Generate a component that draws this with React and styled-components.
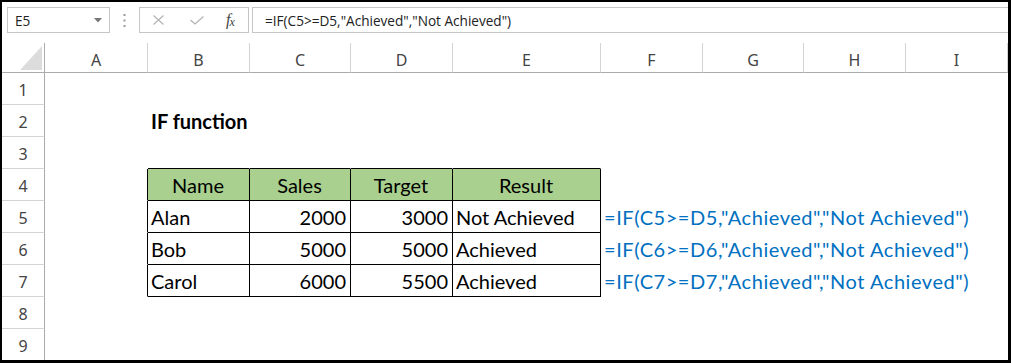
import React from "react";
import styled, { createGlobalStyle } from "styled-components";

const GlobalStyle = createGlobalStyle`
  html, body {
    margin: 0;
    padding: 0;
    background: #fff;
  }
  * {
    box-sizing: border-box;
  }
`;

const Frame = styled.div`
  width: 1011px;
  height: 363px;
  border-style: solid;
  border-color: #000;
  border-width: 2px 3px 3px 2px;
  background: #fff;
  overflow: hidden;
  display: flex;
  flex-direction: column;
`;

/* ---------- formula bar ---------- */

const FormulaBar = styled.div`
  flex: none;
  height: 41px;
  display: flex;
  align-items: flex-start;
  padding: 5px 0 0 5px;
  font-family: "Open Sans", "Noto Sans", sans-serif;
  font-size: 13.6px;
  color: #222;
`;

const NameBox = styled.div`
  width: 103px;
  height: 26px;
  border: 1px solid #c6c6c6;
  display: flex;
  align-items: center;
  justify-content: space-between;
  padding: 0 7px 0 7px;
`;

const Grip = styled.div`
  margin: 0 13px;
  height: 26px;
  display: flex;
  align-items: center;
`;

const FxBox = styled.div`
  width: 110px;
  height: 26px;
  border: 1px solid #c6c6c6;
  display: flex;
  align-items: center;
  padding-left: 13px;
`;

const Fx = styled.span`
  margin-left: 22px;
  font-family: "Liberation Serif", serif;
  font-style: italic;
  font-size: 16px;
  color: #444;
  letter-spacing: -1px;

  sub {
    font-size: 12px;
    vertical-align: -1px;
  }
`;

const FormulaInput = styled.div`
  flex: 1;
  margin-left: 3px;
  height: 26px;
  border: 1px solid #c6c6c6;
  border-right: none;
  display: flex;
  align-items: center;
  padding-left: 12px;
  white-space: nowrap;
`;

/* ---------- sheet grid ---------- */

const Sheet = styled.div`
  display: grid;
  grid-template-columns: 43px 103px 102px 101px 102px 148px 102px 101px 102px 102px;
  grid-template-rows: 30px repeat(9, 32px);
`;

const Corner = styled.div`
  border-right: 1px solid #ababab;
  border-bottom: 1px solid #ababab;
  display: flex;
  align-items: flex-end;
  justify-content: flex-end;
  padding: 0 2px 2px 0;
`;

const ColHead = styled.div`
  border-right: 1px solid #d4d4d4;
  border-bottom: 1px solid #ababab;
  display: flex;
  align-items: center;
  justify-content: center;
  padding-top: 4px;
  font-family: "Noto Sans", "Open Sans", sans-serif;
  font-size: 16px;
  color: #444;
`;

const RowHead = styled.div`
  border-right: 1px solid #ababab;
  border-bottom: 1px solid #d4d4d4;
  display: flex;
  align-items: center;
  justify-content: center;
  padding-top: 3px;
  font-family: "Noto Sans", "Open Sans", sans-serif;
  font-size: 16px;
  color: #444;
`;

const Cell = styled.div`
  border-right: 1px solid ${({ $right }) => $right || "transparent"};
  border-bottom: 1px solid ${({ $bottom }) => $bottom || "transparent"};
  background: ${({ $fill }) => $fill || "transparent"};
  display: flex;
  align-items: center;
  justify-content: ${({ $align }) =>
    $align === "right" ? "flex-end" : $align === "center" ? "center" : "flex-start"};
  padding: 0 4px 0 3px;
  white-space: nowrap;
  overflow: visible;
  font-family: "Lato", "Liberation Sans", sans-serif;
  font-size: 20px;
  font-weight: ${({ $bold }) => ($bold ? 700 : 400)};
  letter-spacing: ${({ $spacing }) => $spacing || 0}px;
  color: ${({ $color }) => $color || "#000"};
`;

const COLS = ["A", "B", "C", "D", "E", "F", "G", "H", "I"];
const GREEN = "#a9d08e";
const BLUE = "#0070c0";

const formula = (r) => `=IF(C${r}>=D${r},"Achieved","Not Achieved")`;

// cell contents keyed by address
const cells = {
  B2: { text: "IF function", bold: true },
  B4: { text: "Name", fill: GREEN, align: "center" },
  C4: { text: "Sales", fill: GREEN, align: "center" },
  D4: { text: "Target", fill: GREEN, align: "center" },
  E4: { text: "Result", fill: GREEN, align: "center" },
  B5: { text: "Alan" },
  C5: { text: "2000", align: "right" },
  D5: { text: "3000", align: "right" },
  E5: { text: "Not Achieved" },
  F5: { text: formula(5), color: BLUE, spacing: 0.55 },
  B6: { text: "Bob" },
  C6: { text: "5000", align: "right" },
  D6: { text: "5000", align: "right" },
  E6: { text: "Achieved" },
  F6: { text: formula(6), color: BLUE, spacing: 0.55 },
  B7: { text: "Carol" },
  C7: { text: "6000", align: "right" },
  D7: { text: "5500", align: "right" },
  E7: { text: "Achieved" },
  F7: { text: formula(7), color: BLUE, spacing: 0.55 },
};

// table B4:E7 gets thin black borders all round
const inTable = (c, r) => c >= 1 && c <= 4 && r >= 4 && r <= 7;

const borderFor = (c, r) => {
  const right = inTable(c, r) || (c === 0 && r >= 4 && r <= 7) ? "#000" : null;
  const bottom = inTable(c, r) || (r === 3 && c >= 1 && c <= 4) ? "#000" : null;
  return { right, bottom };
};

const Caret = () => (
  <svg width="8" height="5" viewBox="0 0 8 5">
    <polygon points="0,0 8,0 4,4.5" fill="#777" />
  </svg>
);

const Dots = () => (
  <svg width="3" height="13" viewBox="0 0 3 13">
    <rect x="0.5" y="0" width="2" height="2" fill="#9a9a9a" />
    <rect x="0.5" y="5.5" width="2" height="2" fill="#9a9a9a" />
    <rect x="0.5" y="11" width="2" height="2" fill="#9a9a9a" />
  </svg>
);

const Cancel = () => (
  <svg width="11" height="10" viewBox="0 0 11 10">
    <path d="M0.5 0.5 L10.5 9.5 M10.5 0.5 L0.5 9.5" stroke="#b4b4b4" strokeWidth="1.2" fill="none" />
  </svg>
);

const Enter = () => (
  <svg width="14" height="9" viewBox="0 0 14 9" style={{ marginLeft: 26 }}>
    <path d="M0.5 4 L5 8 L13.5 0.5" stroke="#b4b4b4" strokeWidth="1.3" fill="none" />
  </svg>
);

const SelectAll = () => (
  <svg width="22" height="24" viewBox="0 0 22 24">
    <polygon points="22,0 22,24 0,24" fill="#dcdcdc" />
  </svg>
);

export default function App() {
  const rows = [1, 2, 3, 4, 5, 6, 7, 8, 9];
  return (
    <>
      <GlobalStyle />
      <Frame>
        <FormulaBar>
          <NameBox>
            <span>E5</span>
            <Caret />
          </NameBox>
          <Grip>
            <Dots />
          </Grip>
          <FxBox>
            <Cancel />
            <Enter />
            <Fx>
              f<sub>x</sub>
            </Fx>
          </FxBox>
          <FormulaInput>{formula(5)}</FormulaInput>
        </FormulaBar>

        <Sheet>
          <Corner>
            <SelectAll />
          </Corner>
          {COLS.map((col) => (
            <ColHead key={col}>{col}</ColHead>
          ))}
          {rows.map((r) => (
            <React.Fragment key={r}>
              <RowHead>{r}</RowHead>
              {COLS.map((col, c) => {
                const data = cells[`${col}${r}`] || {};
                const { right, bottom } = borderFor(c, r);
                return (
                  <Cell
                    key={col}
                    $right={right}
                    $bottom={bottom}
                    $fill={data.fill}
                    $align={data.align}
                    $bold={data.bold}
                    $color={data.color}
                    $spacing={data.spacing}
                  >
                    {data.text}
                  </Cell>
                );
              })}
            </React.Fragment>
          ))}
        </Sheet>
      </Frame>
    </>
  );
}
